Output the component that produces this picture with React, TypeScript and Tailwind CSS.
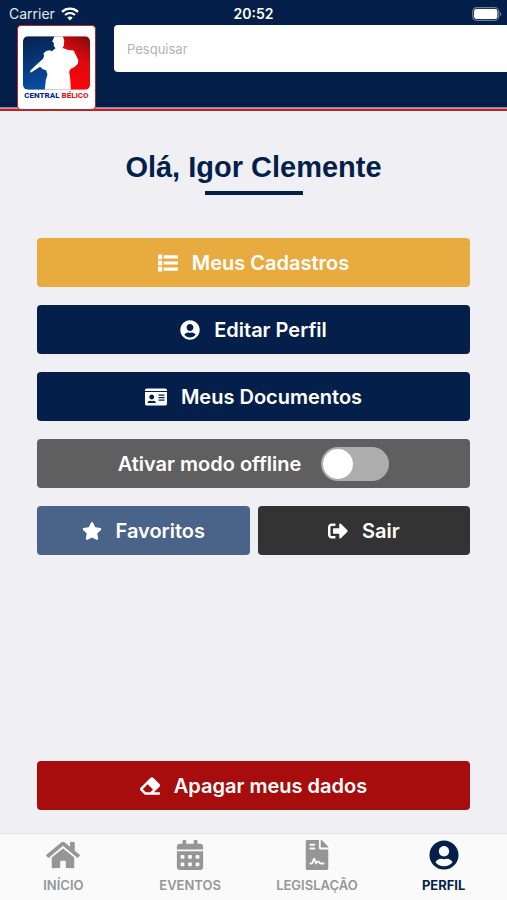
import { useState } from "react";
import type { ComponentType } from "react";
import {
  FaCalendarAlt,
  FaEraser,
  FaFileContract,
  FaHome,
  FaIdCard,
  FaSignOutAlt,
  FaStar,
  FaUserCircle,
} from "react-icons/fa";

type ActionButtonProps = {
  icon: ComponentType<{ className?: string }>;
  label: string;
  color: string;
  iconSize?: string;
};

const ListIcon = ({ className }: { className?: string }) => (
  <svg viewBox="0 0 20 20" className={`size-[1em] ${className}`} fill="currentColor" aria-hidden="true">
    <rect x="0" y="1.4" width="4.2" height="4.8" rx="0.6" />
    <rect x="0" y="7.6" width="4.2" height="4.8" rx="0.6" />
    <rect x="0" y="13.8" width="4.2" height="4.8" rx="0.6" />
    <rect x="5.6" y="2.2" width="14.4" height="3.2" rx="0.6" />
    <rect x="5.6" y="8.4" width="14.4" height="3.2" rx="0.6" />
    <rect x="5.6" y="14.6" width="14.4" height="3.2" rx="0.6" />
  </svg>
);

const ActionButton = ({ icon: Icon, label, color, iconSize = "text-xl" }: ActionButtonProps) => (
  <button
    type="button"
    className={`flex h-[49px] w-full items-center justify-center gap-[14px] rounded text-xl font-semibold text-white ${color}`}
  >
    <Icon className={iconSize} aria-hidden="true" />
    <span>{label}</span>
  </button>
);

const StatusBar = () => (
  <div className="grid h-[25px] grid-cols-3 items-center px-[9px] pt-[2px] text-sm text-white">
    <div className="flex items-center gap-[6px]">
      <span className="text-slate-200">Carrier</span>
      <svg viewBox="0 0 18 14" className="h-[14px] w-[18px]" fill="none" stroke="#fff" aria-hidden="true">
        <path d="M1 4.8C5.6.6 12.4.6 17 4.8" strokeWidth="2.3" />
        <path d="M4 8C6.9 5.4 11.1 5.4 14 8" strokeWidth="2.2" />
        <path d="M9 13.4 6.3 10.6c1.6-1.5 3.8-1.5 5.4 0z" fill="#fff" stroke="none" />
      </svg>
    </div>
    <span className="text-center font-semibold">20:52</span>
    <svg viewBox="0 0 30 14" className="-mr-1 h-[14px] w-[30px] justify-self-end" aria-hidden="true">
      <rect x="0.7" y="0.7" width="26" height="12.6" rx="4" fill="none" stroke="#71809b" strokeWidth="1.2" />
      <rect x="2" y="2" width="23.4" height="10" rx="2.4" fill="#fff" />
      <path d="M28 4.8c1.8.7 1.8 3.7 0 4.4z" fill="#71809b" />
    </svg>
  </div>
);

const Logo = () => (
  <a
    href="#inicio"
    className="relative z-10 -mb-[3px] flex h-[85px] w-[79px] shrink-0 flex-col items-center rounded border border-[#b3262c] bg-white pt-[10px]"
  >
    <svg viewBox="68 108 200 160" className="h-[54px] w-[67px]" aria-hidden="true">
      <defs>
        <linearGradient id="blue" x1="0.2" y1="0" x2="0.4" y2="1">
          <stop offset="0" stopColor="#06224f" />
          <stop offset="0.55" stopColor="#06397f" />
          <stop offset="1" stopColor="#0a4ea6" />
        </linearGradient>
        <linearGradient id="red" x1="0.8" y1="0" x2="0.4" y2="1">
          <stop offset="0" stopColor="#8a0a0c" />
          <stop offset="0.4" stopColor="#dc0a10" />
          <stop offset="1" stopColor="#ff0508" />
        </linearGradient>
        <clipPath id="panel">
          <rect x="68" y="108" width="200" height="160" rx="15" />
        </clipPath>
      </defs>
      <g clipPath="url(#panel)">
        <rect x="68" y="108" width="106" height="160" fill="url(#blue)" />
        <rect x="174" y="108" width="94" height="160" fill="url(#red)" />
        <path
          d="M162 108 L187 108 L191 120 L190 136 L186 143 L203 149 L219 151 L226 165 L233 179 L232 190 L222 200 L210 206 L206 214 L209 236 L211 268 L133 268 L136 240 L141 222 L137 210 L127 207 L119 199 L91 217 L89 212 L101 200 L113 189 L128 175 L131 166 L129 160 L137 152 L148 150 L154 153 L165 144 L160 137 L160 128 L155 124 Z"
          fill="#fff"
        />
      </g>
    </svg>
    <span className="whitespace-nowrap font-['Roboto',sans-serif] text-[8px] leading-[11px] font-extrabold text-[#0a2396]">
      CENTRAL <span className="text-[#e01820]">BÉLICO</span>
    </span>
  </a>
);

const OfflineToggle = () => {
  const [offline, setOffline] = useState(false);

  return (
    <label className="flex h-[49px] w-full cursor-pointer items-center justify-center gap-5 rounded bg-[#5f5f5f] text-xl font-semibold text-white">
      Ativar modo offline
      <input
        type="checkbox"
        role="switch"
        checked={offline}
        onChange={(e) => setOffline(e.target.checked)}
        className="flex h-[34px] w-[68px] cursor-pointer appearance-none items-center rounded-full bg-[#adadad] px-[2px] before:size-[30px] before:rounded-full before:bg-white checked:justify-end checked:bg-green-500"
      />
    </label>
  );
};

const tabs = [
  { label: "INÍCIO", href: "#inicio", icon: FaHome },
  { label: "EVENTOS", href: "#eventos", icon: FaCalendarAlt },
  { label: "LEGISLAÇÃO", href: "#legislacao", icon: FaFileContract },
  { label: "PERFIL", href: "#perfil", icon: FaUserCircle, active: true },
];

const TabBar = () => (
  <nav className="grid h-[67px] grid-cols-4 border-t border-[#e2e2e6] bg-[#fafafa]">
    {tabs.map(({ label, href, icon: Icon, active }) => (
      <a
        key={label}
        href={href}
        aria-current={active ? "page" : undefined}
        className={`flex flex-col items-center gap-[6px] pt-[6px] text-[13px] leading-[18px] ${
          active ? "font-bold text-[#041f49]" : "font-semibold text-[#969696]"
        }`}
      >
        <Icon className="h-[30px] w-[34px]" aria-hidden="true" />
        {label}
      </a>
    ))}
  </nav>
);

const App = () => {
  return (
    <div className="flex min-h-screen flex-col overflow-x-hidden bg-[#efeff4] font-['Inter',sans-serif]">
      <header className="bg-[#041f49]">
        <StatusBar />
        <div className="flex items-start gap-[18px] pl-[17px]">
          <Logo />
          <input
            type="search"
            aria-label="Pesquisar"
            placeholder="Pesquisar"
            className="h-[47px] min-w-0 flex-1 rounded-l bg-white px-[13px] text-[13px] text-gray-800 outline-none placeholder:text-[#b4b4b4]"
          />
        </div>
        <div className="h-1 border-t border-b-2 border-t-[#8d8ba3] border-b-[#b3262c] bg-[#d98d93]" />
      </header>

      <main className="flex flex-1 flex-col px-[37px] pt-[38px] pb-[23px]">
        <h1 className="text-center font-['Liberation_Sans',sans-serif] text-[29px] leading-9 font-bold text-[#041f49]">
          Olá, Igor Clemente
        </h1>
        <div className="mx-auto mt-[6px] h-1 w-[98px] bg-[#041f49]" />

        <div className="mt-[43px] flex flex-col gap-[18px]">
          <ActionButton icon={ListIcon} label="Meus Cadastros" color="bg-[#e8ab3f]" />
          <ActionButton icon={FaUserCircle} label="Editar Perfil" color="bg-[#041f49]" />
          <ActionButton icon={FaIdCard} label="Meus Documentos" color="bg-[#041f49]" iconSize="text-[22px]" />
          <OfflineToggle />
          <div className="grid grid-cols-2 gap-2">
            <ActionButton icon={FaStar} label="Favoritos" color="bg-[#496389]" />
            <ActionButton icon={FaSignOutAlt} label="Sair" color="bg-[#333333]" />
          </div>
        </div>

        <div className="mt-auto pt-[18px]">
          <ActionButton icon={FaEraser} label="Apagar meus dados" color="bg-[#a80d0d]" />
        </div>
      </main>

      <TabBar />
    </div>
  );
};

export default App;
